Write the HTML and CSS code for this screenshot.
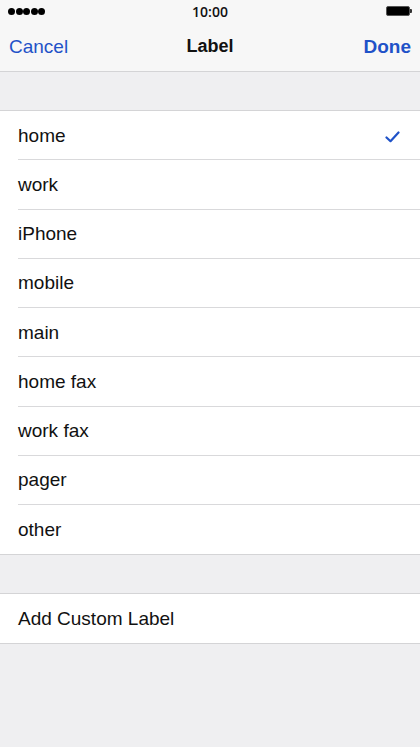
FILE: index.html
```html
<!DOCTYPE html>
<html>
<head>
<meta charset="utf-8">
<link rel="stylesheet" href="styles.css">
</head>
<body>
<div class="screen">
  <div class="status">
    <div class="signal"><span></span><span></span><span></span><span></span><span></span></div>
    <div class="time">10:00</div>
    <div class="battery"><div class="batt-body"></div><div class="batt-tip"></div></div>
  </div>
  <div class="nav">
    <div class="nav-btn">Cancel</div>
    <div class="nav-title">Label</div>
    <div class="nav-btn done">Done</div>
  </div>
  <div class="gap"></div>
  <ul class="group">
    <li class="row"><span>home</span>
      <svg class="check" width="15" height="12" viewBox="0 0 15 12"><path d="M1.5 6.5 L5.5 10.2 L13.5 1.5" fill="none" stroke="#1f52c8" stroke-width="2.2" stroke-linecap="round" stroke-linejoin="round"/></svg>
    </li>
    <li class="row"><span>work</span></li>
    <li class="row"><span>iPhone</span></li>
    <li class="row"><span>mobile</span></li>
    <li class="row"><span>main</span></li>
    <li class="row"><span>home fax</span></li>
    <li class="row"><span>work fax</span></li>
    <li class="row"><span>pager</span></li>
    <li class="row"><span>other</span></li>
  </ul>
  <div class="gap"></div>
  <ul class="group">
    <li class="row single"><span>Add Custom Label</span></li>
  </ul>
</div>
</body>
</html>
```
FILE: styles.css
```css
* { box-sizing: border-box; }
html, body { margin: 0; padding: 0; }
body {
  background: #efeff1;
  font-family: "Liberation Sans", Arial, sans-serif;
  color: #111;
}
.screen {
  width: 420px;
  min-height: 747px;
  background: #efeff1;
}
.status {
  height: 22px;
  background: #f7f7f7;
  display: flex;
  align-items: center;
  justify-content: space-between;
  padding: 0 8px;
  position: relative;
}
.signal { display: flex; gap: 0.5px; }
.signal span {
  width: 7px; height: 7px; border-radius: 50%; background: #000; display: block;
}
.time {
  position: absolute; left: 0; right: 0; text-align: center;
  font-size: 14px; font-weight: 600; font-family: "Open Sans", "Liberation Sans", sans-serif; color: #111;
  top: 2px;
}
.battery { display: flex; align-items: center; }
.batt-body {
  width: 24px; height: 10px; background: #000; border-radius: 2px;
  border: 1px solid #555;
}
.batt-tip { width: 2px; height: 4px; background: #333; border-radius: 0 1px 1px 0; }
.nav {
  height: 50px;
  background: #f7f7f7;
  border-bottom: 1px solid #d4d4d6;
  display: flex;
  align-items: center;
  justify-content: space-between;
  padding: 1px 9px 0 9px;
  position: relative;
}
.nav-btn { font-size: 19px; color: #1f52c8; }
.nav-btn.done { font-weight: bold; font-size: 19px; }
.nav-title {
  position: absolute; left: 0; right: 0; text-align: center;
  font-size: 18px; font-weight: bold; color: #111;
  top: 14px;
}
.gap { height: 38px; }
.group {
  list-style: none; margin: 0; padding: 0;
  background: #fff;
  border-top: 1px solid #d4d4d6;
  border-bottom: 1px solid #d4d4d6;
}
.row {
  height: 49.25px;
  margin-left: 18px;
  padding-right: 20px;
  padding-top: 1px;
  display: flex;
  align-items: center;
  justify-content: space-between;
  font-size: 19px;
  color: #111;
  border-bottom: 1px solid #d9d9db;
}
.row.single { height: 48.5px; }
.row:last-child { border-bottom: none; }
.check { margin-top: 2px; }
```
